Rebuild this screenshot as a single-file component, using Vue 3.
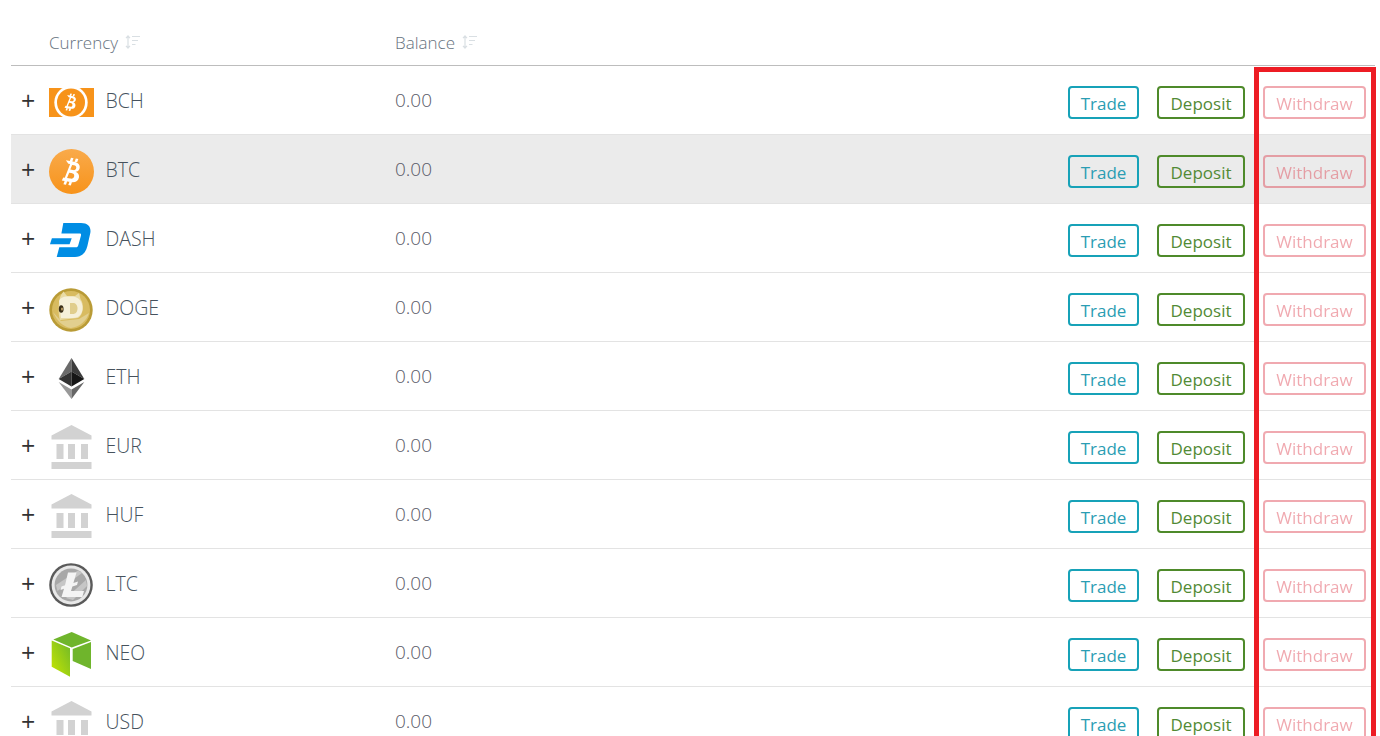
<script setup>
const rows = [
  { code: 'BCH', icon: 'bch' },
  { code: 'BTC', icon: 'btc', active: true },
  { code: 'DASH', icon: 'dash' },
  { code: 'DOGE', icon: 'doge' },
  { code: 'ETH', icon: 'eth' },
  { code: 'EUR', icon: 'bank' },
  { code: 'HUF', icon: 'bank' },
  { code: 'LTC', icon: 'ltc' },
  { code: 'NEO', icon: 'neo' },
  { code: 'USD', icon: 'bank' }
]
const bolt = 'M14.5 10 h8.2 c4.6 0 7 2.1 7 5.2 c0 2.3 -1.3 3.9 -3.4 4.6 c2.8 .6 4.4 2.5 4.4 5.2 c0 3.9 -2.9 6 -7.9 6 h-8.8 l.9 -3.3 h1.6 l3 -14.6 h-1.9 z M21.6 13.6 l-1 5 h2.7 c2 0 3 -.8 3 -2.6 c0 -1.6 -1 -2.4 -2.8 -2.4 z M20 21.9 l-1.2 5.7 h3.3 c2.3 0 3.6 -1 3.6 -3 c0 -1.8 -1.2 -2.7 -3.4 -2.7 z M19.2 6.5 h2.6 l-.6 3.5 h-2.6 z M24.2 6.5 h2.6 l-.6 3.5 h-2.6 z M16.9 31 h2.6 l-.6 3.5 h-2.6 z M21.9 31 h2.6 l-.6 3.5 h-2.6 z'
</script>

<template>
  <div class="page">
    <div class="table">
      <div class="head">
        <div class="head-cell currency">
          <span>Currency</span>
          <svg class="sort" viewBox="0 0 15 14" width="15" height="14">
            <g fill="none" stroke="#d9dfe3" stroke-width="1.2">
              <path d="M3 1v12M1 3.2 3 1l2 2.2M1 10.8 3 13l2-2.2" />
              <path d="M7 1.5h8M7 5.5h6M7 9.5h3.5" />
            </g>
          </svg>
        </div>
        <div class="head-cell">
          <span>Balance</span>
          <svg class="sort" viewBox="0 0 15 14" width="15" height="14">
            <g fill="none" stroke="#d9dfe3" stroke-width="1.2">
              <path d="M3 1v12M1 3.2 3 1l2 2.2M1 10.8 3 13l2-2.2" />
              <path d="M7 1.5h8M7 5.5h6M7 9.5h3.5" />
            </g>
          </svg>
        </div>
      </div>

      <div v-for="row in rows" :key="row.code" class="row" :class="{ active: row.active }">
        <span class="plus">+</span>
        <svg class="icon" :class="{ soft: row.icon === 'bank' }" viewBox="0 0 45 45" width="45" height="45">
          <template v-if="row.icon === 'bch'">
            <rect x="0" y="8" width="45" height="29" fill="#f7931a" />
            <circle cx="22" cy="22.5" r="16.7" fill="#fff" />
            <circle cx="22" cy="22.5" r="14" fill="#f7931a" />
            <g transform="translate(22 22.3) rotate(10) scale(.62) translate(-22.7 -20.5)"><path :d="bolt" fill="#fff" fill-rule="evenodd" /></g>
          </template>
          <template v-else-if="row.icon === 'btc'">
            <defs>
              <linearGradient id="btc-g" x1="0" y1="0" x2="0" y2="1">
                <stop offset="0" stop-color="#f9aa4b" />
                <stop offset="1" stop-color="#f7931a" />
              </linearGradient>
            </defs>
            <circle cx="22.5" cy="22.5" r="22.5" fill="url(#btc-g)" />
            <g transform="translate(23 22.8) rotate(10) scale(.98) translate(-22.7 -20.5)"><path :d="bolt" fill="#fff" fill-rule="evenodd" /></g>
          </template>
          <template v-else-if="row.icon === 'dash'">
            <path d="M14.3 5 H32 C39.5 5 42.5 9.5 41.2 15.5 L38.4 28 C37 34.5 32.5 39 26 39 H7.7 L10.3 29.3 H27 C28.2 29.3 28.9 28.7 29.2 27.5 L32 17.5 C32.3 16.3 31.8 15.6 30.6 15.6 H12.4 Z" fill="#008de4" />
            <path d="M2.9 20.3 H22.7 L20.6 26.2 H1 Z" fill="#008de4" />
          </template>
          <template v-else-if="row.icon === 'doge'">
            <circle cx="22" cy="23" r="21.7" fill="#b99b36" />
            <circle cx="22" cy="23" r="19" fill="#d8bb60" />
            <path d="M4 25 C8 34 14 40 22 41 C31 40 38 33 40 26 L30 32 L12 34 Z" fill="#e2cf8f" />
            <path d="M12 8 L14.5 4.5 L18 9 H26 L30 6 L31.5 12 C35.5 17 34.5 28 29 31 L11 33 C9 28 9 14 12 8 Z" fill="#e9dba6" />
            <path d="M10 14 C11 11 14 9.5 18 9.5 H24 C30 10 33.5 15 33.5 21 C33.5 27 30 31 24 31 H12 Z" fill="#f6f0d9" />
            <ellipse cx="12.2" cy="22" rx="2.4" ry="3.8" fill="#3a2e18" />
            <ellipse cx="13" cy="22" rx=".9" ry="1.6" fill="#c9a86b" />
            <path d="M21 16 V27 H24 C26.5 27 28.5 24.8 28.5 21.5 C28.5 18 26.5 16 24 16 Z" fill="#e0cd8c" />
          </template>
          <template v-else-if="row.icon === 'eth'">
            <path d="M22.5 2 L9.7 23 22.5 15.5Z" fill="#6a6a6a" />
            <path d="M22.5 2 L35.3 23 22.5 15.5Z" fill="#3c3c3c" />
            <path d="M9.7 23 L22.5 15.5 V30.5Z" fill="#333" />
            <path d="M35.3 23 L22.5 15.5 V30.5Z" fill="#161616" />
            <path d="M9.7 26 L22.5 33.5 V43Z" fill="#999" />
            <path d="M35.3 26 L22.5 33.5 V43Z" fill="#666" />
          </template>
          <template v-else-if="row.icon === 'bank'">
            <g fill="#d2d2d2">
              <path d="M22.5 0 L42.5 10.5 V14.5 H2.5 V10.5 Z" />
              <rect x="7.5" y="19" width="7" height="15" />
              <rect x="19" y="19" width="7" height="15" />
              <rect x="32" y="19" width="7" height="15" />
              <rect x="2.5" y="37" width="40" height="7" />
            </g>
          </template>
          <template v-else-if="row.icon === 'ltc'">
            <circle cx="22" cy="22" r="21.8" fill="#5a5a5a" />
            <circle cx="22" cy="22" r="19.4" fill="#e8e8e8" />
            <circle cx="22" cy="22" r="16.4" fill="#a8a8a8" />
            <path d="M7 22 L29 7.5 L33 10 L8.5 28 Z" fill="#c6c6c6" />
            <path d="M17 35 L37 17 L38 23 L24 37 Z" fill="#c6c6c6" />
            <path d="M19 9.5 H27.5 L24.4 20 L29 18.5 L28 22 L23.4 23.6 L22 28 H35 L33.3 34 H12.5 L15 25.7 L11.5 27 L12.5 23.6 L16 22.2 Z" fill="#f4f4f4" />
          </template>
          <template v-else-if="row.icon === 'neo'">
            <defs>
              <linearGradient id="neo-g" x1="0" y1="1" x2="1" y2="0">
                <stop offset="0" stop-color="#c8e600" />
                <stop offset="1" stop-color="#6fb82a" />
              </linearGradient>
            </defs>
            <path d="M22.7 0 L42 8.6 L22.7 15.6 L4.3 7.5 Z" fill="#6fb52c" />
            <path d="M2.7 8.4 L21 16.2 V44.7 L2.7 34.7 Z" fill="url(#neo-g)" />
            <path d="M23.7 17 L42 10 V37 L23.7 29 Z" fill="#6fb52c" />
          </template>
        </svg>
        <span class="code">{{ row.code }}</span>
        <span class="balance">0.00</span>
        <div class="actions">
          <button class="btn trade">Trade</button>
          <button class="btn deposit">Deposit</button>
          <button class="btn withdraw">Withdraw</button>
        </div>
      </div>
    </div>
    <div class="highlight"></div>
  </div>
</template>

<style scoped>
.page {
  position: relative;
  height: 736px;
  overflow: hidden;
  background: #fff;
  padding-left: 11px;
  box-sizing: border-box;
  font-family: "Open Sans", "Noto Sans", sans-serif;
  font-weight: 300;
  font-size: 19px;
  color: #46525d;
}
.table { width: 1364px; }
.head {
  display: grid;
  grid-template-columns: 346px 1fr;
  height: 65px;
  padding-left: 38px;
  border-bottom: 1px solid #bdbdbd;
  color: #66727e;
  font-size: 17px;
}
.head-cell {
  display: flex;
  align-items: center;
  gap: 7px;
  padding-top: 19px;
}
.row {
  display: flex;
  align-items: center;
  height: 68px;
  border-bottom: 1px solid #e3e3e3;
}
.row.active { background: #ebebeb; }
.plus {
  width: 38px;
  padding-left: 10px;
  box-sizing: border-box;
  font-size: 25px;
  font-weight: 400;
  color: #333;
  line-height: 22px;
}
.icon { margin-top: 5px; flex: none; }
.icon.soft { filter: blur(.6px); }
.code { margin-left: 11.5px; width: 289.5px; font-size: 19.5px; }
.balance { color: #5a5a68; }
.actions {
  margin-left: auto;
  display: flex;
  gap: 18px;
  padding-right: 9px;
  padding-top: 5px;
}
.btn {
  height: 33px;
  background: transparent;
  border: 2px solid;
  border-radius: 4px;
  padding: 2px 0 0;
  font: inherit;
  font-size: 17px;
  font-weight: 400;
  cursor: pointer;
}
.trade { width: 71px; color: #2a9db3; border-color: #17a2b8; }
.deposit { width: 88px; color: #528a35; border-color: #4e8a2a; }
.withdraw { width: 103px; color: #dc3545; border-color: #dc3545; opacity: .42; }
.highlight {
  position: absolute;
  left: 1254px;
  top: 67px;
  width: 122px;
  height: 720px;
  border: 5px solid #ed1c24;
  box-sizing: border-box;
  pointer-events: none;
}
</style>

<style>
html, body { margin: 0; overflow: hidden; }
</style>
